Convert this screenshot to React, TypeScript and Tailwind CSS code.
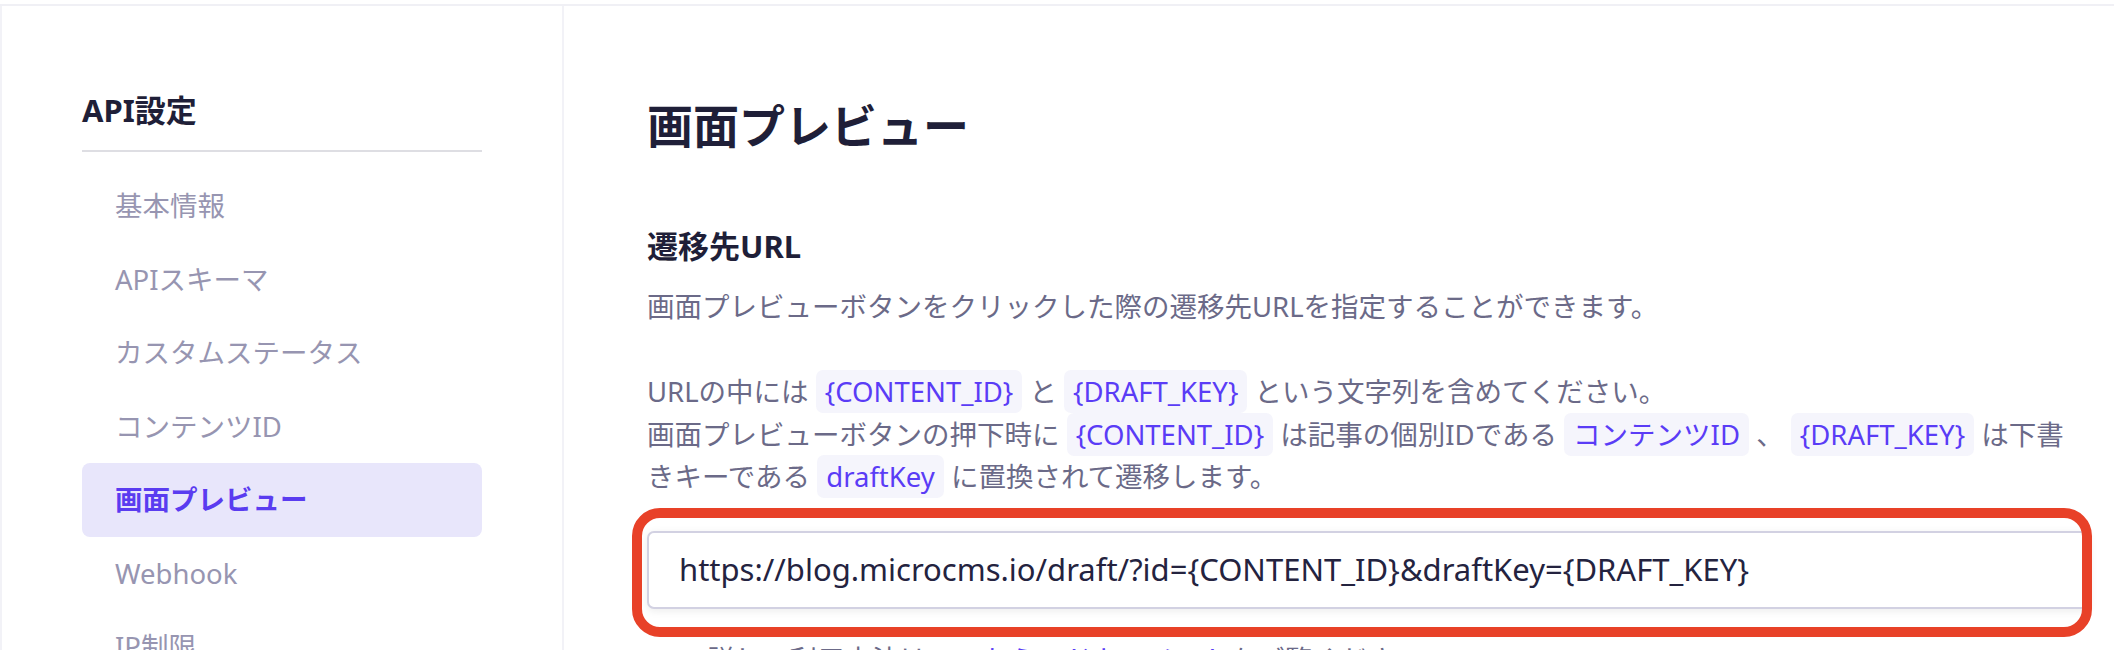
import React from "react";

const Chip = ({ children }: { children: React.ReactNode }) => (
  <span className="rounded-[7px] bg-[#f5f5fc] px-[9px] py-[3px] text-[#5a3cf6]">{children}</span>
);

const items = [
  "基本情報",
  "APIスキーマ",
  "カスタムステータス",
  "コンテンツID",
  "画面プレビュー",
  "Webhook",
  "IP制限",
];

export default function App() {
  return (
    <div className="h-[650px] overflow-hidden bg-white font-['Noto_Sans','Noto_Sans_CJK_JP',sans-serif]">
      <div className="h-[4px] bg-white" />
      <div className="flex h-[646px] border-t-2 border-[#f0f0f5]">
        <aside className="w-[564px] shrink-0 border-l-2 border-r-2 border-[#f2f2f7] px-[80px] pt-[80px]">
          <h2 className="text-[31px] font-bold leading-[48px] text-[#1f1f38]">API設定</h2>
          <div className="mt-[16px] h-[2px] bg-[#dedee3]" />
          <nav className="mt-[17px] flex flex-col">
            {items.map((it) =>
              it === "画面プレビュー" ? (
                <div
                  key={it}
                  className="flex h-[73.5px] shrink-0 items-center rounded-[8px] bg-[#e8e6fb] px-[33px] text-[27.5px] font-bold text-[#5a3cf0]"
                >
                  {it}
                </div>
              ) : (
                <div
                  key={it}
                  className="flex h-[73.5px] shrink-0 items-center px-[33px] text-[27.5px] text-[#9795b1]"
                >
                  {it}
                </div>
              )
            )}
          </nav>
        </aside>
        <main className="min-w-0 flex-1 pl-[83px] pr-[24px] pt-[85px]">
          <h1 className="text-[46px] font-bold leading-[68px] text-[#1f1f38]">画面プレビュー</h1>
          <h3 className="mt-[64px] text-[31px] font-bold leading-[46px] text-[#1f1f38]">遷移先URL</h3>
          <div className="mt-[17px] text-[27.5px] leading-[42.5px] text-[#6b6a88]">
            <div className="whitespace-nowrap">
              画面プレビューボタンをクリックした際の遷移先URLを指定することができます。
            </div>
            <div className="h-[42.5px]" />
            <div className="whitespace-nowrap">
              URLの中には <Chip>{"{CONTENT_ID}"}</Chip> と <Chip>{"{DRAFT_KEY}"}</Chip> という文字列を含めてください。
            </div>
            <div className="whitespace-nowrap">
              画面プレビューボタンの押下時に <Chip>{"{CONTENT_ID}"}</Chip> は記事の個別IDである{" "}
              <Chip>コンテンツID</Chip> 、 <Chip>{"{DRAFT_KEY}"}</Chip> は下書
            </div>
            <div className="whitespace-nowrap">
              きキーである <Chip>draftKey</Chip> に置換されて遷移します。
            </div>
          </div>
          <div className="relative mt-[32px]">
            <div className="flex h-[78px] items-center rounded-[7px] border-2 border-[#d2d1e2] bg-white pl-[30px] text-[31px] text-[#24233f] shadow-[0_2px_8px_rgba(0,0,0,0.08)]">
              https://blog.microcms.io/draft/?id={"{CONTENT_ID}"}&draftKey={"{DRAFT_KEY}"}
            </div>
            <div className="pointer-events-none absolute -bottom-[28px] -left-[15px] -right-[2px] -top-[23px] rounded-[28px] border-[10px] border-[#e84128]" />
          </div>
          <div className="mt-[30px] whitespace-nowrap pl-[60px] text-[27.5px] leading-[42.5px] text-[#6b6a88]">
            詳しい利用方法は、<span className="text-[#5a3cf6]">こちらのドキュメント</span>をご覧ください。
          </div>
        </main>
      </div>
    </div>
  );
}
